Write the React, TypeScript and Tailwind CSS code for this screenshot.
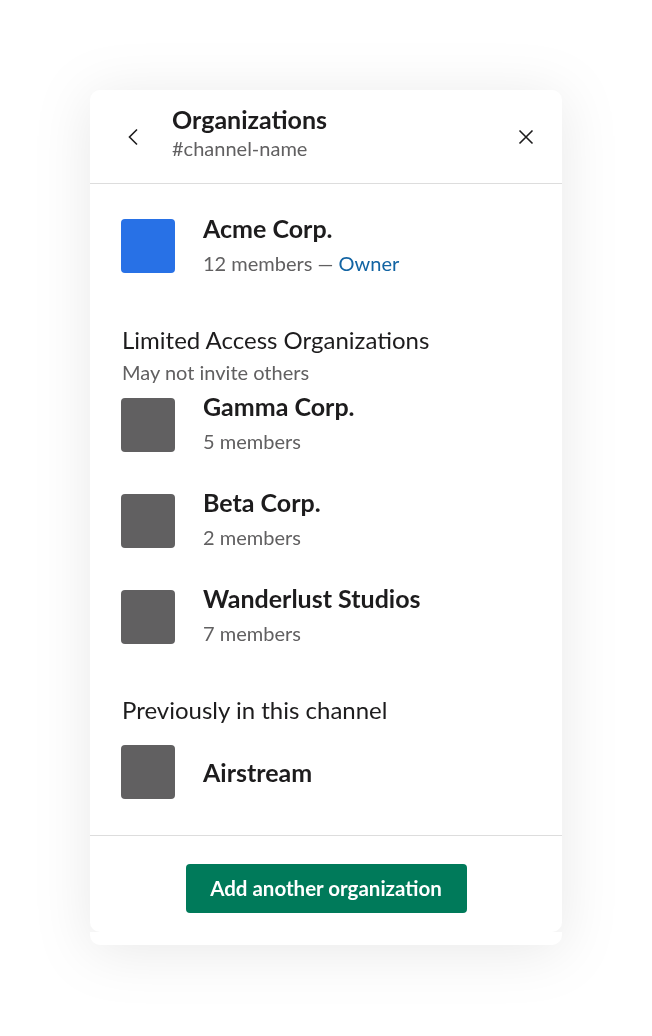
import React from "react";

interface Org {
  name: string;
  members?: string;
}

const limited: Org[] = [
  { name: "Gamma Corp.", members: "5 members" },
  { name: "Beta Corp.", members: "2 members" },
  { name: "Wanderlust Studios", members: "7 members" },
];

const OrgRow: React.FC<{ org: Org }> = ({ org }) => (
  <div className="flex items-center gap-[28px] h-[54px]">
    <div className="w-[54px] h-[54px] rounded-[4px] bg-[#616061] shrink-0" />
    <div className={org.members ? "flex flex-col -mt-[6px]" : "flex flex-col"}>
      <div className="text-[25px] leading-[30px] font-bold text-[#1d1c1d]">{org.name}</div>
      {org.members && (
        <div className="text-[20px] leading-[26px] text-[#616061] mt-[7px]">{org.members}</div>
      )}
    </div>
  </div>
);

export default function App() {
  return (
    <div
      className="min-h-screen bg-white flex justify-center pt-[90px]"
      style={{ fontFamily: "Lato, 'Noto Sans', sans-serif" }}
    >
      <div className="w-[472px] h-fit drop-shadow-[0_6px_28px_rgba(0,0,0,0.09)]">
        <div className="bg-white rounded-[10px]">
          {/* header */}
          <div className="h-[94px] flex items-center border-b border-[#dddddd] pl-[37px] pr-[28px]">
            <svg width="12" height="18" viewBox="0 0 12 18" className="shrink-0">
              <path d="M10 1.5 L2.5 9 L10 16.5" fill="none" stroke="#1d1c1d" strokeWidth="1.6" />
            </svg>
            <div className="ml-[33px] flex flex-col -mt-[9px]">
              <div className="text-[25px] leading-[30px] font-bold text-[#1d1c1d]">Organizations</div>
              <div className="text-[20px] leading-[26px] text-[#616061] mt-[1px]">#channel-name</div>
            </div>
            <svg width="16" height="16" viewBox="0 0 16 16" className="ml-auto shrink-0">
              <path d="M1.5 1.5 L14.5 14.5 M14.5 1.5 L1.5 14.5" fill="none" stroke="#1d1c1d" strokeWidth="1.6" />
            </svg>
          </div>

          {/* body */}
          <div className="pl-[31px] pr-[28px] pt-[35px] pb-[36px]">
            <div className="flex items-center gap-[28px] h-[54px]">
              <div className="w-[54px] h-[54px] rounded-[4px] bg-[#2871e6] shrink-0" />
              <div className="flex flex-col -mt-[4px]">
                <div className="text-[25px] leading-[30px] font-bold text-[#1d1c1d]">Acme Corp.</div>
                <div className="text-[20px] leading-[26px] text-[#616061] mt-[7px]">
                  12 members — <span className="text-[#1264a3]">Owner</span>
                </div>
              </div>
            </div>

            <div className="mt-[52px] ml-[1px] text-[24px] leading-[30px] text-[#1d1c1d]">
              Limited Access Organizations
            </div>
            <div className="ml-[1px] text-[20px] leading-[26px] text-[#616061] mt-[4px]">May not invite others</div>

            <div className="mt-[13px] flex flex-col gap-[42px]">
              {limited.map((o) => (
                <OrgRow key={o.name} org={o} />
              ))}
            </div>

            <div className="mt-[51px] ml-[1px] text-[24px] leading-[30px] text-[#1d1c1d]">
              Previously in this channel
            </div>
            <div className="mt-[20px]">
              <OrgRow org={{ name: "Airstream" }} />
            </div>
          </div>

          {/* footer */}
          <div className="border-t border-[#dddddd] flex justify-center pt-[28px] pb-[19px]">
            <button className="w-[281px] h-[49px] rounded-[4px] bg-[#007a5a] text-white text-[20.5px] font-bold">
              Add another organization
            </button>
          </div>
        </div>
        <div className="h-[13px] bg-white rounded-b-[10px]" />
      </div>
    </div>
  );
}
